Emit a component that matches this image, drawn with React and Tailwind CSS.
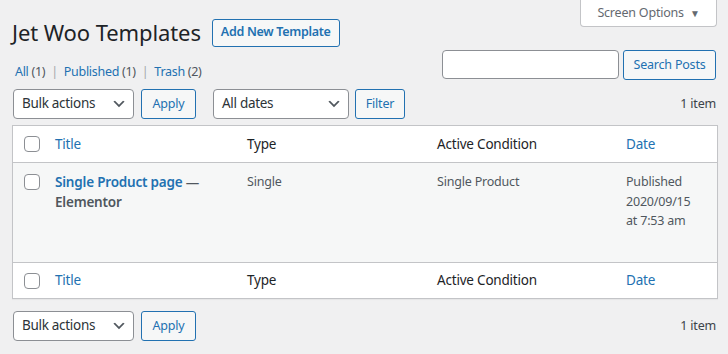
import React from "react";

const font = { fontFamily: '"Noto Sans", "Open Sans", sans-serif' };

function Chevron() {
  return (
    <svg width="16" height="16" viewBox="0 0 20 20" className="shrink-0">
      <path d="M5 6l5 5 5-5 2 1-7 7-7-7z" fill="#50575e" />
    </svg>
  );
}

function Select({ label, w }) {
  return (
    <div
      className={`flex h-[30px] items-center justify-between rounded-[4px] border border-[#8c8f94] bg-white pl-[8px] pr-[6px] text-[13.5px] tracking-[-0.3px] text-[#2c3338] ${w}`}
    >
      <span className="leading-none">{label}</span>
      <Chevron />
    </div>
  );
}

function Btn({ children, w }) {
  return (
    <div
      className={`flex h-[30px] items-center justify-center rounded-[3px] border border-[#2271b1] bg-[#f6f7f7] text-[12.5px] tracking-[-0.2px] text-[#2271b1] ${w}`}
    >
      {children}
    </div>
  );
}

function Check() {
  return <div className="h-[16px] w-[16px] rounded-[4px] border border-[#8c8f94] bg-white" />;
}

function HeadRow({ h }) {
  return (
    <div className={`flex items-center bg-white text-[13.5px] tracking-[-0.2px] ${h}`}>
      <div className="flex w-[32px] shrink-0 pl-[11px]">
        <Check />
      </div>
      <div className="w-[192px] shrink-0 pl-[10px] text-[#2271b1]">Title</div>
      <div className="w-[190px] shrink-0 pl-[10px] text-[#1d2327]">Type</div>
      <div className="w-[189px] shrink-0 pl-[10px] text-[#1d2327]">Active Condition</div>
      <div className="flex-1 pl-[10px] text-[#2271b1]">Date</div>
    </div>
  );
}

export default function App() {
  return (
    <div className="min-h-[354px] w-[728px] bg-[#f0f0f1] text-[#3c434a]" style={font}>
      <div className="flex justify-end pr-[11px]">
        <div className="flex h-[27px] w-[137px] items-center justify-center gap-[6px] rounded-b-[4px] border border-t-0 border-[#c3c4c7] bg-white text-[12.5px] tracking-[-0.2px] text-[#646970]">
          <span>Screen Options</span>
          <span className="text-[10px]">▼</span>
        </div>
      </div>
      <div className="px-[12px]">
        <div className="-mt-[9px] flex items-center gap-[11px]">
          <h1 className="text-[22px] leading-[29px] tracking-[-0.1px] text-[#1d2327]">Jet Woo Templates</h1>
          <div className="flex h-[28px] items-center rounded-[3px] border border-[#2271b1] bg-[#f6f7f7] px-[8px] text-[12.5px] font-semibold tracking-[-0.3px] text-[#2271b1]">
            Add New Template
          </div>
        </div>
        <div className="mt-[3px] flex items-start justify-between">
          <div className="mt-[13px] pl-[3px] text-[12.5px] leading-[18px] tracking-[-0.3px]">
            <span className="text-[#2271b1]">All</span> <span className="text-[#50575e]">(1)</span>
            <span className="px-[6px] text-[#a7aaad]">|</span>
            <span className="text-[#2271b1]">Published</span> <span className="text-[#50575e]">(1)</span>
            <span className="px-[6px] text-[#a7aaad]">|</span>
            <span className="text-[#2271b1]">Trash</span> <span className="text-[#50575e]">(2)</span>
          </div>
          <div className="flex gap-[4px]">
            <div className="h-[29px] w-[177px] rounded-[4px] border border-[#8c8f94] bg-white" />
            <Btn w="w-[93px] h-[29px]">Search Posts</Btn>
          </div>
        </div>
        <div className="mt-[8px] flex items-center">
          <div className="ml-[1px] flex items-center gap-[7px]">
            <Select label="Bulk actions" w="w-[121px]" />
            <Btn w="w-[55px]">Apply</Btn>
          </div>
          <div className="ml-[17px] flex items-center gap-[6px]">
            <Select label="All dates" w="w-[136px]" />
            <Btn w="w-[50px]">Filter</Btn>
          </div>
          <div className="flex-1 text-right text-[12.5px] tracking-[-0.2px] text-[#3c434a]">1 item</div>
        </div>
        <div className="mt-[6px] w-[706px] border border-[#c3c4c7] shadow-[0_1px_1px_rgba(0,0,0,0.04)]">
          <HeadRow h="h-[36px]" />
          <div className="flex h-[101px] items-start border-y border-[#c3c4c7] bg-[#f6f7f7] pt-[9px]">
            <div className="flex w-[32px] shrink-0 pl-[11px] pt-[2px]">
              <Check />
            </div>
            <div className="w-[192px] shrink-0 pl-[10px] text-[13.5px] font-semibold leading-[20px] tracking-[-0.2px]">
              <span className="text-[#2271b1]">Single Product page</span>
              <span className="text-[#50575e]"> — Elementor</span>
            </div>
            <div className="w-[190px] shrink-0 pl-[10px] text-[12.5px] leading-[19px] tracking-[-0.2px] text-[#50575e]">Single</div>
            <div className="w-[189px] shrink-0 pl-[10px] text-[12.5px] leading-[19px] tracking-[-0.2px] text-[#50575e]">Single Product</div>
            <div className="flex-1 pl-[10px] text-[12.5px] leading-[19.5px] tracking-[-0.2px] text-[#50575e]">
              Published
              <br />
              2020/09/15
              <br />
              at 7:53 am
            </div>
          </div>
          <HeadRow h="h-[35px]" />
        </div>
        <div className="mt-[12px] flex items-center">
          <div className="ml-[1px] flex items-center gap-[7px]">
            <Select label="Bulk actions" w="w-[121px]" />
            <Btn w="w-[55px]">Apply</Btn>
          </div>
          <div className="flex-1 text-right text-[12.5px] tracking-[-0.2px] text-[#3c434a]">1 item</div>
        </div>
      </div>
    </div>
  );
}
